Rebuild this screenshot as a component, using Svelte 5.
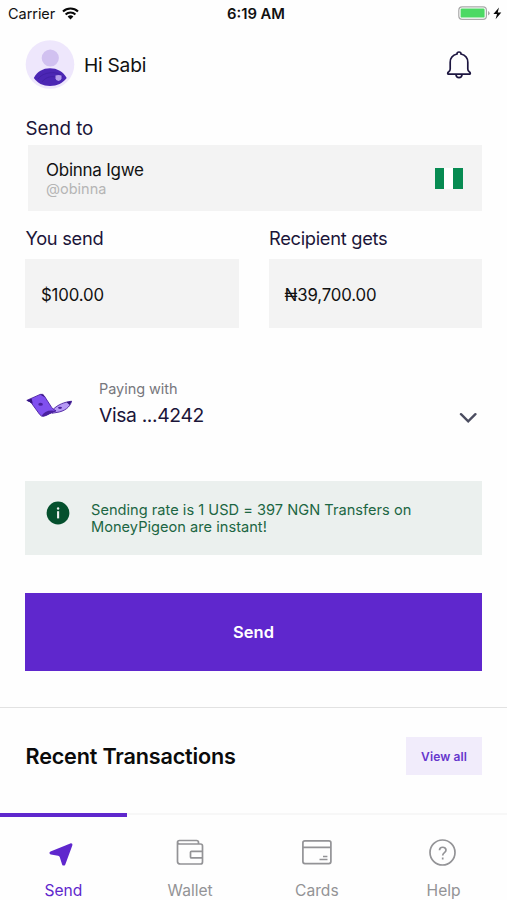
<script>
  const recipient = { name: "Obinna Igwe", handle: "@obinna" };

  const amounts = [
    { label: "You send", value: "$100.00" },
    { label: "Recipient gets", value: "₦39,700.00" },
  ];

  const tabs = [
    { id: "send", label: "Send" },
    { id: "wallet", label: "Wallet" },
    { id: "cards", label: "Cards" },
    { id: "help", label: "Help" },
  ];

  let activeTab = $state("send");
</script>

<div class="screen">
  <!-- Phone status bar -->
  <div class="status-bar">
    <div class="carrier">
      <span>Carrier</span>
      <svg width="17" height="13" viewBox="0 0 17 13">
        <path d="M1 4.6a10.8 10.8 0 0 1 15 0M3.6 7.4a7.1 7.1 0 0 1 9.8 0" fill="none" stroke="#080808" stroke-width="2.1" />
        <path d="M5.6 9.6a4.2 4.2 0 0 1 5.8 0L8.5 12.6z" fill="#080808" />
      </svg>
    </div>
    <span class="time">6:19 AM</span>
    <div class="battery">
      <svg width="44" height="15" viewBox="0 0 44 15">
        <rect x="0.8" y="0.8" width="27.6" height="12.6" rx="3.4" fill="#fff" stroke="#a9a9a9" stroke-width="1.2" />
        <rect x="2.6" y="2.6" width="24" height="9" rx="1.2" fill="#4cd964" />
        <path d="M30 5v4.4q1.7-.7 1.7-2.2T30 5z" fill="#a9a9a9" />
        <path d="M41 1.5 35.4 8H39l-1.4 5.3L43.3 6.4h-3.6z" fill="#080808" />
      </svg>
    </div>
  </div>

  <header class="header">
    <svg class="avatar" width="50" height="50" viewBox="0 0 50 50">
      <circle cx="25" cy="24.5" r="24.3" fill="#eee7fc" />
      <circle cx="25.3" cy="18" r="8.6" fill="#d1c1f0" />
      <path d="M8.8 38C12 31.5 18 28.2 25 28.2S38.2 31.5 41.7 38C38 43 32 46 25 46S12.3 43 8.8 38z" fill="#4b26b4" />
      <path d="M13 39c4-7 20-9 25-2M17 42c4-6 13-7 17-3" fill="none" stroke="#3c1c9c" stroke-width="0.6" />
      <path d="M30.5 35.6l3-.6 3 .6v2.6q0 2-3 2.8-3-.8-3-2.8z" fill="#b39be9" />
    </svg>
    <span class="greeting">Hi Sabi</span>
    <svg class="bell" width="28" height="30" viewBox="0 0 28 30">
      <path d="M12 4a2 2 0 0 1 4 0c4.6 1.2 6.8 4.2 6.8 8.2V19c0 1.4.4 2 1.5 2.8 1.3.9 1.3 2.4.1 2.4H3.6c-1.2 0-1.2-1.5.1-2.4 1.1-.8 1.5-1.4 1.5-2.8v-6.800c0-4 2.200-7 6.800-8.200z" />
      <path d="M10.900 24.300c.5 4.500 5.700 4.500 6.200 0" />
    </svg>
  </header>

  <main>
    <h2 class="label send-to">Send to</h2>
    <div class="recipient">
      <div>
        <div class="name">{recipient.name}</div>
        <div class="handle">{recipient.handle}</div>
      </div>
      <div class="flag"></div>
    </div>

    <div class="amounts">
      {#each amounts as amount}
        <div>
          <h2 class="label">{amount.label}</h2>
          <div class="amount">{amount.value}</div>
        </div>
      {/each}
    </div>

    <div class="payment">
      <svg class="note" width="47" height="26" viewBox="0 0 47 26">
        <path d="M27 16.500C32 11.500 38 9.200 45.600 8.200c-1.600 5.800-6.600 10.200-15.600 11.400l-4 .6z" fill="#b699f5" stroke="#4a209f" stroke-width="0.9" />
        <path d="M.8 7.400 14.200 1.400q2.600-.8 4 1.400l7.300 11.400q1.500 2.400 4.500 3.600c-5.500.7-8 4.900-12.500 5.500q-2.300.2-3.800-1.800L5.600 10.300Q3.800 8.200.8 7.400z" fill="#8050ef" stroke="#4a209f" stroke-width="0.9" />
        <path d="M15.500 23.300c2.500-5 7.500-6.800 15-5.300-4.800 1.800-9 5.300-15 5.300z" fill="#4a209f" />
        <path d="M.8 7.400 5.600 5.400l1.200 5.400zM14 1.400l3.200.2 1.600 2.600zM45.600 8.200l-5.200.9 3.200 3z" fill="#34147f" />
        <ellipse cx="14.600" cy="11.200" rx="2.300" ry="1.500" fill="#4a209f" />
        <ellipse cx="34" cy="14.800" rx="2" ry="1.100" fill="#4a209f" />
      </svg>
      <div class="method">
        <div class="method-label">Paying with</div>
        <div class="card">Visa ...4242</div>
      </div>
      <svg class="chevron" width="18" height="12" viewBox="0 0 18 12">
        <path d="M2 2.200 9.200 9.300l7.200-7.100" />
      </svg>
    </div>

    <div class="rate">
      <svg width="24" height="24" viewBox="0 0 24 24">
        <circle cx="12" cy="12" r="11.400" fill="#04502d" />
        <path d="M12.100 10.200v7.200" stroke="#ebf0ee" stroke-width="2.100" />
        <circle cx="12.100" cy="7.500" r="1.200" fill="#ebf0ee" />
      </svg>
      <p>Sending rate is 1 USD = 397 NGN Transfers on MoneyPigeon are instant!</p>
    </div>

    <button class="send-btn">Send</button>
  </main>

  <section class="recent">
    <h3>Recent Transactions</h3>
    <button class="view-all">View all</button>
  </section>

  <nav class="tabs">
    {#each tabs as tab}
      <button class="tab" class:active={activeTab === tab.id} onclick={() => (activeTab = tab.id)}>
        <svg width="32" height="32" viewBox="0 0 32 32">
          {#if tab.id === "send"}
            <path d="M3.500 14.600 23.300 6.500c1.400-.5 2.500.5 2 1.900l-7 19c-.6 1.600-2.600 1.600-3.200 0l-2.300-7.200q-.4-1.300-1.700-1.500l-7.200-1.200c-1.700-.3-2-2.300-.4-2.900z" fill="currentColor" />
          {:else if tab.id === "wallet"}
            <path d="M24.500 7V5.500q0-2-2-2h-17q-2 0-2 2v19q0 2.500 3 2.500h20q2 0 2-2v-16q0-2-2-2h-21q-2 0-2-2M28.500 14.300h-11q-1 0-1 1v4.600q0 1 1 1h11" class="line" />
          {:else if tab.id === "cards"}
            <rect x="1.900" y="3.800" width="28" height="22.800" rx="2" class="line" />
            <path d="M2 10.300h28M22 19.500h4.400M18.500 22.500h8" class="line" />
          {:else}
            <circle cx="14.500" cy="15.500" r="12.500" class="line" />
            <path d="M11.500 13.300c0-4 6.500-4 6.500-.2 0 2.700-3.300 2.300-3.300 5.300M14.700 20.600v1.800" class="line" />
          {/if}
        </svg>
        <span>{tab.label}</span>
      </button>
    {/each}
  </nav>
</div>

<style>
  :global(body) {
    background: #fff;
  }

  .screen {
    width: 507px;
    height: 900px;
    overflow: hidden;
    display: flex;
    flex-direction: column;
    font-family: Inter, "Liberation Sans", sans-serif;
    color: #111;
    background: #fefefe;
  }

  h2,
  h3,
  p {
    margin: 0;
  }

  button {
    font-family: inherit;
    border: none;
    padding: 0;
    cursor: pointer;
  }

  svg {
    display: block;
    flex-shrink: 0;
  }

  .status-bar,
  .header,
  main,
  .recent {
    flex-shrink: 0;
  }

  .status-bar {
    height: 27px;
    padding: 0 5px 0 8px;
    display: grid;
    grid-template-columns: 1fr auto 1fr;
    align-items: center;
    font-size: 14.5px;
  }

  .carrier {
    display: flex;
    align-items: center;
    gap: 7px;
    letter-spacing: -0.05px;
  }

  .time {
    padding: 1px 0 0 2px;
    font-weight: 600;
    font-size: 14.8px;
  }

  .battery {
    justify-self: end;
  }

  .header {
    height: 75px;
    padding: 0 34px 0 25px;
    display: flex;
    align-items: center;
  }

  .greeting {
    margin-left: 9px;
    font-size: 19.2px;
    letter-spacing: -0.25px;
  }

  .bell {
    margin-left: auto;
    fill: none;
    stroke: #1d1640;
    stroke-width: 1.7;
  }

  main {
    padding: 14px 25px 0;
  }

  .label {
    height: 24px;
    line-height: 24px;
    font-size: 18.3px;
    letter-spacing: -0.3px;
    font-weight: 400;
    color: #1b1539;
    padding-left: 0.5px;
  }

  .send-to {
    padding-top: 1px;
    font-size: 18.8px;
    letter-spacing: -0.05px;
  }

  .recipient {
    height: 66px;
    margin: 4px 0 0 3px;
    padding: 1px 19px 0 18px;
    box-sizing: border-box;
    background: #f3f3f3;
    display: flex;
    align-items: center;
    justify-content: space-between;
  }

  .name {
    padding-top: 1px;
    font-size: 17px;
    line-height: 20px;
    letter-spacing: -0.25px;
  }

  .handle {
    font-size: 14.5px;
    line-height: 18px;
    color: #b5b5b5;
  }

  .flag {
    width: 28px;
    height: 21px;
    background: linear-gradient(to right, #078b52 9.5px, #fff 9.5px 18.5px, #078b52 18.5px);
  }

  .amounts {
    display: grid;
    grid-template-columns: 1fr 1fr;
    gap: 30px;
    margin-top: 15px;
  }

  .amount {
    height: 69px;
    margin-top: 9px;
    padding: 2px 16px 0;
    box-sizing: border-box;
    display: flex;
    align-items: center;
    background: #f3f3f3;
    font-size: 16.8px;
    letter-spacing: -0.15px;
  }

  .payment {
    height: 52px;
    margin-top: 49px;
    padding: 0 5px 0 1px;
    display: flex;
    align-items: center;
  }

  .note {
    margin-top: 5px;
  }

  .method {
    margin-left: 26px;
  }

  .method-label {
    font-size: 14.5px;
    line-height: 24px;
    letter-spacing: -0.05px;
    color: #77777d;
  }

  .card {
    font-size: 19.3px;
    line-height: 28px;
    letter-spacing: -0.35px;
    color: #1b1539;
  }

  .chevron {
    margin: 35px 0 0 auto;
    align-self: flex-start;
    fill: none;
    stroke: #4b4d60;
    stroke-width: 2.4;
    stroke-linecap: round;
  }

  .rate {
    height: 74px;
    margin-top: 52px;
    padding: 20px 40px 0 21px;
    box-sizing: border-box;
    display: flex;
    align-items: flex-start;
    gap: 21px;
    background: #ebf0ee;
  }

  .rate p {
    margin-top: 0.5px;
    font-size: 14.6px;
    line-height: 17.5px;
    letter-spacing: 0.02px;
    color: #1c6643;
  }

  .send-btn {
    display: block;
    width: 100%;
    height: 78px;
    margin-top: 38px;
    background: #5f27cd;
    color: #fff;
    font-size: 16.5px;
    font-weight: 600;
  }

  .recent {
    height: 106px;
    margin-top: 36px;
    padding: 0 25px 9px;
    box-sizing: border-box;
    display: flex;
    align-items: center;
    justify-content: space-between;
    border-top: 1px solid #e2e2e2;
  }

  .recent h3 {
    padding-left: 0.5px;
    font-size: 21.6px;
    font-weight: 600;
    letter-spacing: -0.18px;
    color: #0b0b0b;
  }

  .view-all {
    width: 76px;
    height: 38px;
    background: #f1ecfb;
    color: #6636cd;
    font-size: 12px;
    font-weight: 600;
    letter-spacing: 0.1px;
  }

  .tabs {
    flex: 1;
    display: grid;
    grid-template-columns: repeat(4, 1fr);
  }

  .tab {
    display: flex;
    flex-direction: column;
    align-items: center;
    justify-content: flex-start;
    padding-top: 22px;
    background: none;
    border-top: 2px solid #f7f7f7;
    color: #939396;
    font-size: 15.6px;
    line-height: 20px;
  }

  .tab svg {
    margin-bottom: 12px;
  }

  .tab.active {
    border-top: 4px solid #5f27cd;
    padding-top: 20px;
    color: #5f27cd;
  }

  .line {
    fill: none;
    stroke: currentColor;
    stroke-width: 1.7;
  }
</style>
